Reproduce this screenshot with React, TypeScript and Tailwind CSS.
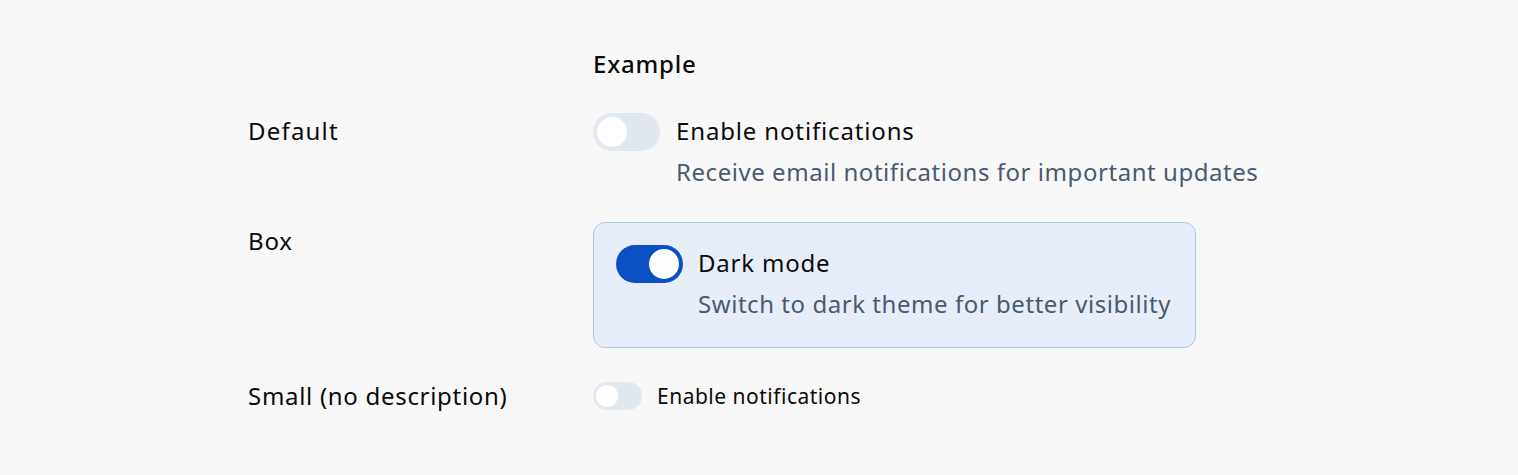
import { useState } from "react";

type SwitchProps = {
  checked: boolean;
  onChange: (v: boolean) => void;
  size?: "md" | "sm";
};

function Switch({ checked, onChange, size = "md" }: SwitchProps) {
  const track =
    size === "md" ? "h-[38px] w-[67px] p-[4px]" : "h-[28px] w-[49px] p-[3px]";
  const thumb = size === "md" ? "h-[30px] w-[30px]" : "h-[22px] w-[22px]";
  const shift = size === "md" ? "translate-x-[29px]" : "translate-x-[21px]";
  return (
    <button
      type="button"
      role="switch"
      aria-checked={checked}
      onClick={() => onChange(!checked)}
      className={`${track} shrink-0 rounded-full flex items-center transition-colors ${
        checked ? "bg-[#0b50c3]" : "bg-[#e2e8f0]"
      }`}
    >
      <span
        className={`${thumb} block rounded-full bg-white transition-transform ${
          checked ? shift : "translate-x-0"
        }`}
      />
    </button>
  );
}

export default function App() {
  const [notify, setNotify] = useState(false);
  const [dark, setDark] = useState(true);
  const [small, setSmall] = useState(false);

  return (
    <div
      className="min-h-[475px] bg-[#f8f8f8] text-[#0b0b0b] text-[24px] leading-[36px] tracking-[0.8px]"
      style={{ fontFamily: '"Noto Sans", "Open Sans", sans-serif' }}
    >
      <div className="mx-auto w-[1022px] pt-[46px]">
        {/* header */}
        <div className="grid grid-cols-[345px_1fr]">
          <div />
          <div className="font-medium">Example</div>
        </div>

        {/* Default */}
        <div className="grid grid-cols-[345px_1fr] mt-[31px]">
          <div className="tracking-[1.2px]">Default</div>
          <div className="flex gap-[16px]">
            <Switch checked={notify} onChange={setNotify} />
            <div>
              <div className="tracking-[0.85px]">Enable notifications</div>
              <div className="mt-[5px] text-[#4b5a6e] tracking-[0.55px]">
                Receive email notifications for important updates
              </div>
            </div>
          </div>
        </div>

        {/* Box */}
        <div className="grid grid-cols-[345px_1fr] mt-[32px]">
          <div className="pt-[1px]">Box</div>
          <div>
            <div className="inline-flex gap-[15px] w-[603px] rounded-[12px] border border-[#aac8ee] bg-[#e7eef9] px-[22px] pt-[22px] pb-[25px]">
              <Switch checked={dark} onChange={setDark} />
              <div>
                <div>Dark mode</div>
                <div className="mt-[5px] text-[#4b5a6e] tracking-[0.55px]">
                  Switch to dark theme for better visibility
                </div>
              </div>
            </div>
          </div>
        </div>

        {/* Small */}
        <div className="grid grid-cols-[345px_1fr] mt-[30px]">
          <div className="tracking-[0.7px]">Small (no description)</div>
          <div className="flex items-center gap-[15px] h-[36px]">
            <Switch checked={small} onChange={setSmall} size="sm" />
            <span className="text-[21px] leading-[28px] tracking-[0.5px]">
              Enable notifications
            </span>
          </div>
        </div>
      </div>
    </div>
  );
}
